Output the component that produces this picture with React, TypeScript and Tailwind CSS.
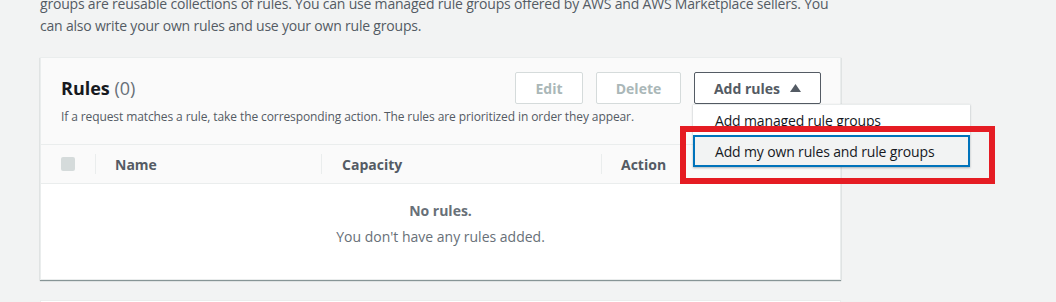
export default function App() {
  return (
    <div
      className="relative h-[302px] w-[1056px] overflow-hidden bg-[#f2f3f3] pl-[40px]"
      style={{ fontFamily: '"Open Sans", "Noto Sans", sans-serif' }}
    >
      <p className="-mt-[7px] text-[14px] leading-[22px] tracking-[-0.2px] text-[#545b64]">
        groups are reusable collections of rules. You can use managed rule groups offered by AWS and AWS Marketplace sellers. You
        <br />
        can also write your own rules and use your own rule groups.
      </p>

      <div className="mt-[20px] w-[801px] border border-[#eaeded] bg-white shadow-[0_1px_1px_0_#879596]">
        <div className="h-[87px] border-b border-[#eaeded] bg-[#fafafa] pl-[20px] pr-[19px] pt-[14px]">
          <div className="flex items-center justify-between">
            <h2 className="text-[18px] leading-[26px] text-[#16191f]">
              <span className="font-bold">Rules</span> <span className="text-[#687078]">(0)</span>
            </h2>
            <div className="flex items-center gap-[13px]">
              <button className="h-[32px] w-[68px] rounded-[2px] border border-[#d5dbdb] bg-white text-[14px] font-bold text-[#aab7b8]">
                Edit
              </button>
              <button className="h-[32px] w-[85px] rounded-[2px] border border-[#d5dbdb] bg-white text-[14px] font-bold text-[#aab7b8]">
                Delete
              </button>
              <div className="relative">
                <button className="flex h-[32px] w-[127px] items-center justify-center gap-[10px] rounded-[2px] border border-[#545b64] bg-white text-[14px] font-bold text-[#545b64]">
                  Add rules
                  <svg width="11" height="8" viewBox="0 0 11 8">
                    <path d="M5.5 0 L11 8 L0 8 Z" fill="#545b64" />
                  </svg>
                </button>
                <div className="absolute left-[-1px] top-[32px] z-10 w-[277px] border-t border-[#eaeded] bg-white shadow-[0_1px_2px_0_rgba(0,28,36,0.3)]">
                  <div className="flex h-[30px] items-center pl-[22px] text-[14px] tracking-[-0.15px] text-[#16191f]">
                    Add managed rule groups
                  </div>
                  <div className="flex h-[32px] items-center border-2 border-[#0073bb] bg-[#f2f3f3] pl-[20px] text-[14px] tracking-[-0.15px] text-[#16191f]">
                    Add my own rules and rule groups
                  </div>
                </div>
              </div>
            </div>
          </div>
          <p className="mt-[5px] whitespace-nowrap text-[12px] leading-[16px] tracking-[-0.1px] text-[#545b64]">
            If a request matches a rule, take the corresponding action. The rules are prioritized in order they appear.
          </p>
        </div>

        <div className="flex h-[39px] items-center border-b border-[#eaeded] bg-[#fafafa] pl-[20px] text-[14px] font-bold text-[#545b64]">
          <div className="h-[14px] w-[14px] rounded-[2px] bg-[#d5dbdb]" />
          <div className="w-[20px]" />
          <div className="flex h-[20px] w-[226px] items-center border-l border-[#eaeded] pl-[19px]">Name</div>
          <div className="flex h-[20px] w-[280px] items-center border-l border-[#eaeded] pl-[20px]">Capacity</div>
          <div className="flex h-[20px] flex-1 items-center border-l border-[#eaeded] pl-[19px]">Action</div>
        </div>

        <div className="flex h-[95px] flex-col items-center pt-[18px] text-[14px] text-[#687078]">
          <div className="font-bold leading-[18px]">No rules.</div>
          <div className="mt-[8px] leading-[18px]">You don&apos;t have any rules added.</div>
        </div>
      </div>

      <div className="mt-[20px] h-[40px] w-[801px] border border-[#eaeded] bg-white" />

      <div className="pointer-events-none absolute left-[680px] top-[126px] z-20 h-[58px] w-[315px] border-[6px] border-[#e51c23]" />
    </div>
  );
}
